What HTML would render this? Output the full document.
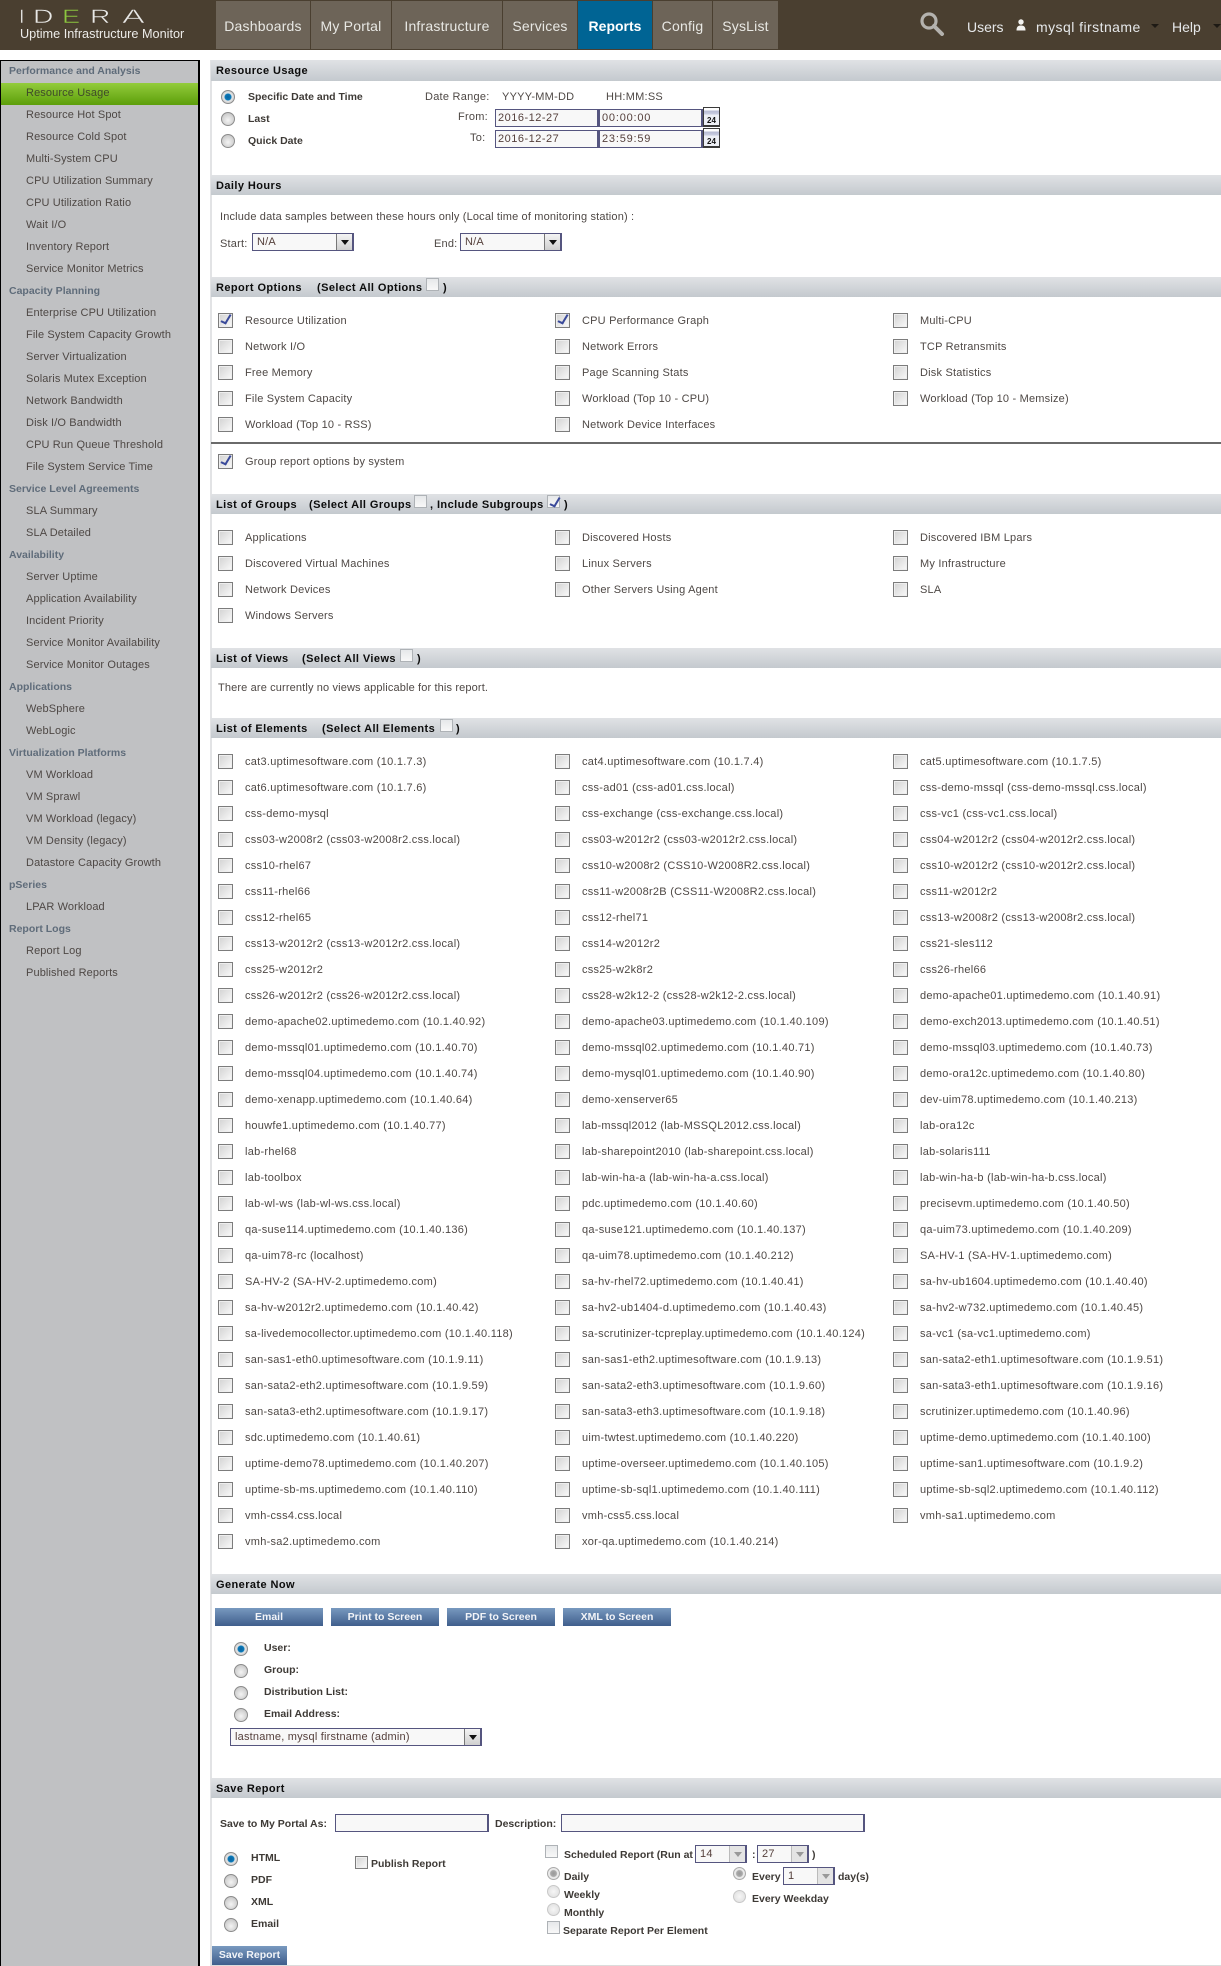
<!DOCTYPE html>
<html><head><meta charset="utf-8"><title>Uptime Infrastructure Monitor</title>
<style>
*{box-sizing:border-box}
html,body{margin:0;padding:0;background:#fff}
body{width:1221px;height:1966px;position:relative;overflow:hidden;font:11px/14px "Liberation Sans",sans-serif;letter-spacing:.2px;color:#4e4845}
.a{position:absolute;white-space:nowrap}
#hd{position:absolute;left:0;top:0;width:1221px;height:50px;background:#4a3f30;color:#f0f0f0;letter-spacing:0}
.tab{position:absolute;top:1px;height:48px;background:#6d6458;font-size:14px;line-height:51px;text-align:center;color:#e8e8e4;letter-spacing:.2px}
.tab.on{background:#006494;color:#fff;font-weight:bold;letter-spacing:0}
.ht{position:absolute;font-size:14px;line-height:20px;top:17px;color:#e6e8ea;white-space:nowrap}
.car{position:absolute;top:24px;width:0;height:0;border:4px solid transparent;border-top:4px solid #1e1a14;border-bottom:0}
.lg{position:absolute;top:6px;font-size:19.5px;line-height:22px;color:#e8e8e6;transform-origin:0 50%;-webkit-text-stroke:.5px #4a3f30}
#sb{position:absolute;left:0;top:60px;width:200px;height:1906px;background:#c0c1c3;border:1px solid #000;border-width:1px 2px 0 1px}
#sb div{height:22px;line-height:21px;padding-left:25px;white-space:nowrap;letter-spacing:.12px}
#sb .h{padding-left:8px;font-weight:bold;color:#5f6c7a;letter-spacing:0;font-size:10.5px}
#sb .on{background:linear-gradient(#93cc3c,#5c9e0a);color:#3f4a2a}
#ln{position:absolute;left:210px;top:60px;width:2px;height:1906px;background:#e2e3e5}
.s{position:absolute;left:211px;width:1010px;height:21px;background:linear-gradient(#e0e2e5,#c4c9ce);font-weight:bold;color:#0c0c0c;line-height:23px;padding-left:5px;font-size:11px;letter-spacing:.42px}
.s b{position:absolute;top:0;white-space:nowrap}
.cb{position:absolute;width:13px;height:13px;border:1px solid #7c7c7c;background:linear-gradient(135deg,#d2d2d2,#fafafa);box-shadow:inset 0 0 0 1px #eeeeee}
.ck::after{content:"";position:absolute;left:4px;top:0;width:4px;height:9px;border:solid #3a4a9a;border-width:0 2px 2px 0;transform:rotate(25deg) skewX(-6deg)}
.hc{border-color:#aeb2b6;background:linear-gradient(#e6e8ea,#f8f8f8);box-shadow:none}
.rows{position:absolute;left:0;width:1221px}
.rows>div{height:26px;position:relative}
.rows p{position:absolute;margin:0;top:0;line-height:14px;white-space:nowrap}
.rows.e p{letter-spacing:.27px}
.rows p:nth-child(1){left:245px}
.rows p:nth-child(2){left:582px}
.rows p:nth-child(3){left:920px}
.rows p::before{content:"";position:absolute;left:-27px;top:-1px;width:13px;height:13px;border:1px solid #7c7c7c;background:linear-gradient(135deg,#d2d2d2,#fafafa);box-shadow:inset 0 0 0 1px #eeeeee}
.rows p.ck::after{left:-22px;top:-1px}
.rd{position:absolute;width:14px;height:14px;border-radius:50%;border:1px solid #8c8c8c;background:radial-gradient(circle at 50% 60%,#f4f4f4,#bcbcbc)}
.rd.on{background:radial-gradient(circle,#0a64a0 0,#0a78b8 3px,#e6e6e6 4px,#c8c8c8 7px)}
.rd.off{border-color:#c8c8c8;background:radial-gradient(circle,#f6f6f6,#dcdcdc);width:13px;height:13px}
.rd.off.sel{border-color:#aaa;background:radial-gradient(circle,#999 0,#aaa 3px,#eee 4px,#ddd 7px)}
.bd{font-weight:bold;color:#3e3a36;font-size:10.5px;letter-spacing:0}
.in{position:absolute;height:18px;border:1px solid #55557f;background:#f8f8f8;font-size:11px;line-height:17px;padding-left:2px;color:#55403c;white-space:nowrap;border-width:1px 2px 1px 1px;letter-spacing:.2px}
.ar{position:absolute;right:0;top:0;width:16px;height:16px;background:linear-gradient(#f4f4f4,#cfcfcf);border-left:1px solid #777}
.ar::after{content:"";position:absolute;left:4px;top:6px;border:4px solid transparent;border-top:5px solid #111;border-bottom:0}
.ar.g{background:#e4e4e4;border-left:1px solid #bbb}
.ar.g::after{border-top-color:#999}
.cal{position:absolute;left:703px;width:17px;height:20px;border:1px solid #3a3a3a;background:linear-gradient(#fff 0,#fff 2px,#b8bcd4 3px,#c8cce0 6px,#eef0f6 7px);color:#111;font-size:8px;line-height:9px;text-align:center;padding-top:8px;font-weight:bold;letter-spacing:0;border-width:1px 1px 2px 1px}
.btn{position:absolute;height:18px;background:linear-gradient(#7899bf,#3f5e8c);color:#f2f4f8;font-weight:bold;text-align:center;line-height:18px;font-size:10.5px;letter-spacing:0}
</style></head><body>

<div id="hd">
<span class="lg" style="left:19px">I</span>
<span class="lg" style="left:33px;transform:scaleX(1.45)">D</span>
<span class="lg" style="left:62px;color:#8cc63f;transform:scaleX(1.4)">E</span>
<span class="lg" style="left:90px;transform:scaleX(1.45)">R</span>
<span class="lg" style="left:122px;transform:scaleX(1.75)">A</span>
<span class="a" style="left:20px;top:25px;font-size:12.7px;line-height:18px;color:#ecebe8">Uptime Infrastructure Monitor</span>
<div class="tab" style="left:216px;width:94px">Dashboards</div>
<div class="tab" style="left:311px;width:80px">My Portal</div>
<div class="tab" style="left:392px;width:110px">Infrastructure</div>
<div class="tab" style="left:503px;width:74px">Services</div>
<div class="tab on" style="left:578px;width:74px">Reports</div>
<div class="tab" style="left:653px;width:59px">Config</div>
<div class="tab" style="left:713px;width:65px">SysList</div>
<svg class="a" style="left:919px;top:11px" width="26" height="25" viewBox="0 0 26 25"><circle cx="10" cy="10" r="7" fill="none" stroke="#b4b2ae" stroke-width="3.2"/><path d="M15 15l8 8" stroke="#b4b2ae" stroke-width="4" stroke-linecap="round"/></svg>
<span class="ht" style="left:967px">Users</span>
<svg class="a" style="left:1015px;top:19px" width="12" height="12" viewBox="0 0 12 12"><circle cx="6" cy="3" r="2.7" fill="#f2f2f0"/><path d="M1.500 11.500c0-4 1.800-5 4.500-5s4.500 1 4.500 5z" fill="#f2f2f0"/></svg>
<span class="ht" style="left:1036px;letter-spacing:.45px">mysql firstname</span>
<i class="car" style="left:1151px"></i>
<span class="ht" style="left:1172px">Help</span>
<i class="car" style="left:1213px"></i>
</div>

<div id="sb">
<div class="h">Performance and Analysis</div>
<div class="on">Resource Usage</div>
<div>Resource Hot Spot</div>
<div>Resource Cold Spot</div>
<div>Multi-System CPU</div>
<div>CPU Utilization Summary</div>
<div>CPU Utilization Ratio</div>
<div>Wait I/O</div>
<div>Inventory Report</div>
<div>Service Monitor Metrics</div>
<div class="h">Capacity Planning</div>
<div>Enterprise CPU Utilization</div>
<div>File System Capacity Growth</div>
<div>Server Virtualization</div>
<div>Solaris Mutex Exception</div>
<div>Network Bandwidth</div>
<div>Disk I/O Bandwidth</div>
<div>CPU Run Queue Threshold</div>
<div>File System Service Time</div>
<div class="h">Service Level Agreements</div>
<div>SLA Summary</div>
<div>SLA Detailed</div>
<div class="h">Availability</div>
<div>Server Uptime</div>
<div>Application Availability</div>
<div>Incident Priority</div>
<div>Service Monitor Availability</div>
<div>Service Monitor Outages</div>
<div class="h">Applications</div>
<div>WebSphere</div>
<div>WebLogic</div>
<div class="h">Virtualization Platforms</div>
<div>VM Workload</div>
<div>VM Sprawl</div>
<div>VM Workload (legacy)</div>
<div>VM Density (legacy)</div>
<div>Datastore Capacity Growth</div>
<div class="h">pSeries</div>
<div>LPAR Workload</div>
<div class="h">Report Logs</div>
<div>Report Log</div>
<div>Published Reports</div>
</div>

<div id="ln"></div>

<div class="s" style="top:60px">Resource Usage</div>
<i class="rd on" style="left:221px;top:90px"></i><span class="a bd" style="left:248px;top:90px">Specific Date and Time</span>
<i class="rd" style="left:221px;top:112px"></i><span class="a bd" style="left:248px;top:112px">Last</span>
<i class="rd" style="left:221px;top:134px"></i><span class="a bd" style="left:248px;top:134px">Quick Date</span>
<span class="a" style="left:425px;top:90px;letter-spacing:.25px">Date Range:</span>
<span class="a" style="left:502px;top:90px;letter-spacing:.25px">YYYY-MM-DD</span>
<span class="a" style="left:606px;top:90px;letter-spacing:.25px">HH:MM:SS</span>
<span class="a" style="left:458px;top:110px;letter-spacing:.25px">From:</span>
<span class="a" style="left:470px;top:131px;letter-spacing:.25px">To:</span>
<div class="in" style="left:495px;top:109px;width:104px;letter-spacing:.5px">2016-12-27</div>
<div class="in" style="left:599px;top:109px;width:104px;letter-spacing:.8px">00:00:00</div>
<div class="cal" style="top:107px">24</div>
<div class="in" style="left:495px;top:130px;width:104px;letter-spacing:.5px">2016-12-27</div>
<div class="in" style="left:599px;top:130px;width:104px;letter-spacing:.8px">23:59:59</div>
<div class="cal" style="top:128px">24</div>

<div class="s" style="top:175px;height:20px">Daily Hours</div>
<span class="a" style="left:220px;top:210px;letter-spacing:.16px">Include data samples between these hours only (Local time of monitoring station) :</span>
<span class="a" style="left:220px;top:237px">Start:</span>
<div class="in" style="left:252px;top:233px;width:102px;padding-left:4px">N/A<i class="ar"></i></div>
<span class="a" style="left:434px;top:237px">End:</span>
<div class="in" style="left:460px;top:233px;width:102px;padding-left:4px">N/A<i class="ar"></i></div>

<div class="s" style="top:277px;height:20px">Report Options<b style="left:106px">(Select All Options</b><b style="left:232px">)</b><i class="cb hc" style="left:215px;top:1px"></i></div>
<div class="rows" style="top:314px">
<div><p class="ck">Resource Utilization</p><p class="ck">CPU Performance Graph</p><p>Multi-CPU</p></div>
<div><p>Network I/O</p><p>Network Errors</p><p>TCP Retransmits</p></div>
<div><p>Free Memory</p><p>Page Scanning Stats</p><p>Disk Statistics</p></div>
<div><p>File System Capacity</p><p>Workload (Top 10 - CPU)</p><p>Workload (Top 10 - Memsize)</p></div>
<div><p>Workload (Top 10 - RSS)</p><p>Network Device Interfaces</p></div>
</div>
<div class="a" style="left:211px;top:442px;width:1010px;height:2px;background:#6a6a6a"></div>
<div class="rows" style="top:455px">
<div><p class="ck">Group report options by system</p></div>
</div>

<div class="s" style="top:494px;height:20px">List of Groups<b style="left:98px">(Select All Groups</b><b style="left:219px">, Include Subgroups</b><b style="left:353px">)</b><i class="cb hc" style="left:203px;top:1px"></i><i class="cb hc ck" style="left:336px;top:1px"></i></div>
<div class="rows" style="top:531px">
<div><p>Applications</p><p>Discovered Hosts</p><p>Discovered IBM Lpars</p></div>
<div><p>Discovered Virtual Machines</p><p>Linux Servers</p><p>My Infrastructure</p></div>
<div><p>Network Devices</p><p>Other Servers Using Agent</p><p>SLA</p></div>
<div><p>Windows Servers</p></div>
</div>

<div class="s" style="top:648px;height:20px">List of Views<b style="left:91px">(Select All Views</b><b style="left:206px">)</b><i class="cb hc" style="left:189px;top:1px"></i></div>
<span class="a" style="left:218px;top:681px;letter-spacing:.14px">There are currently no views applicable for this report.</span>

<div class="s" style="top:718px;height:20px">List of Elements<b style="left:111px">(Select All Elements</b><b style="left:245px">)</b><i class="cb hc" style="left:229px;top:1px"></i></div>
<div class="rows e" style="top:755px">
<div><p>cat3.uptimesoftware.com (10.1.7.3)</p><p>cat4.uptimesoftware.com (10.1.7.4)</p><p>cat5.uptimesoftware.com (10.1.7.5)</p></div>
<div><p>cat6.uptimesoftware.com (10.1.7.6)</p><p>css-ad01 (css-ad01.css.local)</p><p>css-demo-mssql (css-demo-mssql.css.local)</p></div>
<div><p>css-demo-mysql</p><p>css-exchange (css-exchange.css.local)</p><p>css-vc1 (css-vc1.css.local)</p></div>
<div><p>css03-w2008r2 (css03-w2008r2.css.local)</p><p>css03-w2012r2 (css03-w2012r2.css.local)</p><p>css04-w2012r2 (css04-w2012r2.css.local)</p></div>
<div><p>css10-rhel67</p><p>css10-w2008r2 (CSS10-W2008R2.css.local)</p><p>css10-w2012r2 (css10-w2012r2.css.local)</p></div>
<div><p>css11-rhel66</p><p>css11-w2008r2B (CSS11-W2008R2.css.local)</p><p>css11-w2012r2</p></div>
<div><p>css12-rhel65</p><p>css12-rhel71</p><p>css13-w2008r2 (css13-w2008r2.css.local)</p></div>
<div><p>css13-w2012r2 (css13-w2012r2.css.local)</p><p>css14-w2012r2</p><p>css21-sles112</p></div>
<div><p>css25-w2012r2</p><p>css25-w2k8r2</p><p>css26-rhel66</p></div>
<div><p>css26-w2012r2 (css26-w2012r2.css.local)</p><p>css28-w2k12-2 (css28-w2k12-2.css.local)</p><p>demo-apache01.uptimedemo.com (10.1.40.91)</p></div>
<div><p>demo-apache02.uptimedemo.com (10.1.40.92)</p><p>demo-apache03.uptimedemo.com (10.1.40.109)</p><p>demo-exch2013.uptimedemo.com (10.1.40.51)</p></div>
<div><p>demo-mssql01.uptimedemo.com (10.1.40.70)</p><p>demo-mssql02.uptimedemo.com (10.1.40.71)</p><p>demo-mssql03.uptimedemo.com (10.1.40.73)</p></div>
<div><p>demo-mssql04.uptimedemo.com (10.1.40.74)</p><p>demo-mysql01.uptimedemo.com (10.1.40.90)</p><p>demo-ora12c.uptimedemo.com (10.1.40.80)</p></div>
<div><p>demo-xenapp.uptimedemo.com (10.1.40.64)</p><p>demo-xenserver65</p><p>dev-uim78.uptimedemo.com (10.1.40.213)</p></div>
<div><p>houwfe1.uptimedemo.com (10.1.40.77)</p><p>lab-mssql2012 (lab-MSSQL2012.css.local)</p><p>lab-ora12c</p></div>
<div><p>lab-rhel68</p><p>lab-sharepoint2010 (lab-sharepoint.css.local)</p><p>lab-solaris111</p></div>
<div><p>lab-toolbox</p><p>lab-win-ha-a (lab-win-ha-a.css.local)</p><p>lab-win-ha-b (lab-win-ha-b.css.local)</p></div>
<div><p>lab-wl-ws (lab-wl-ws.css.local)</p><p>pdc.uptimedemo.com (10.1.40.60)</p><p>precisevm.uptimedemo.com (10.1.40.50)</p></div>
<div><p>qa-suse114.uptimedemo.com (10.1.40.136)</p><p>qa-suse121.uptimedemo.com (10.1.40.137)</p><p>qa-uim73.uptimedemo.com (10.1.40.209)</p></div>
<div><p>qa-uim78-rc (localhost)</p><p>qa-uim78.uptimedemo.com (10.1.40.212)</p><p>SA-HV-1 (SA-HV-1.uptimedemo.com)</p></div>
<div><p>SA-HV-2 (SA-HV-2.uptimedemo.com)</p><p>sa-hv-rhel72.uptimedemo.com (10.1.40.41)</p><p>sa-hv-ub1604.uptimedemo.com (10.1.40.40)</p></div>
<div><p>sa-hv-w2012r2.uptimedemo.com (10.1.40.42)</p><p>sa-hv2-ub1404-d.uptimedemo.com (10.1.40.43)</p><p>sa-hv2-w732.uptimedemo.com (10.1.40.45)</p></div>
<div><p>sa-livedemocollector.uptimedemo.com (10.1.40.118)</p><p>sa-scrutinizer-tcpreplay.uptimedemo.com (10.1.40.124)</p><p>sa-vc1 (sa-vc1.uptimedemo.com)</p></div>
<div><p>san-sas1-eth0.uptimesoftware.com (10.1.9.11)</p><p>san-sas1-eth2.uptimesoftware.com (10.1.9.13)</p><p>san-sata2-eth1.uptimesoftware.com (10.1.9.51)</p></div>
<div><p>san-sata2-eth2.uptimesoftware.com (10.1.9.59)</p><p>san-sata2-eth3.uptimesoftware.com (10.1.9.60)</p><p>san-sata3-eth1.uptimesoftware.com (10.1.9.16)</p></div>
<div><p>san-sata3-eth2.uptimesoftware.com (10.1.9.17)</p><p>san-sata3-eth3.uptimesoftware.com (10.1.9.18)</p><p>scrutinizer.uptimedemo.com (10.1.40.96)</p></div>
<div><p>sdc.uptimedemo.com (10.1.40.61)</p><p>uim-twtest.uptimedemo.com (10.1.40.220)</p><p>uptime-demo.uptimedemo.com (10.1.40.100)</p></div>
<div><p>uptime-demo78.uptimedemo.com (10.1.40.207)</p><p>uptime-overseer.uptimedemo.com (10.1.40.105)</p><p>uptime-san1.uptimesoftware.com (10.1.9.2)</p></div>
<div><p>uptime-sb-ms.uptimedemo.com (10.1.40.110)</p><p>uptime-sb-sql1.uptimedemo.com (10.1.40.111)</p><p>uptime-sb-sql2.uptimedemo.com (10.1.40.112)</p></div>
<div><p>vmh-css4.css.local</p><p>vmh-css5.css.local</p><p>vmh-sa1.uptimedemo.com</p></div>
<div><p>vmh-sa2.uptimedemo.com</p><p>xor-qa.uptimedemo.com (10.1.40.214)</p></div>
</div>

<div class="s" style="top:1574px;height:20px">Generate Now</div>
<div class="btn" style="left:215px;top:1608px;width:108px">Email</div>
<div class="btn" style="left:331px;top:1608px;width:108px">Print to Screen</div>
<div class="btn" style="left:447px;top:1608px;width:108px">PDF to Screen</div>
<div class="btn" style="left:563px;top:1608px;width:108px">XML to Screen</div>
<i class="rd on" style="left:234px;top:1642px"></i><span class="a bd" style="left:264px;top:1641px">User:</span>
<i class="rd" style="left:234px;top:1664px"></i><span class="a bd" style="left:264px;top:1663px">Group:</span>
<i class="rd" style="left:234px;top:1686px"></i><span class="a bd" style="left:264px;top:1685px">Distribution List:</span>
<i class="rd" style="left:234px;top:1708px"></i><span class="a bd" style="left:264px;top:1707px">Email Address:</span>
<div class="in" style="left:230px;top:1728px;width:252px;padding-left:4px">lastname, mysql firstname (admin)<i class="ar"></i></div>

<div class="s" style="top:1778px;height:20px">Save Report</div>
<span class="a bd" style="left:220px;top:1817px">Save to My Portal As:</span>
<div class="in" style="left:335px;top:1814px;width:154px"></div>
<span class="a bd" style="left:495px;top:1817px">Description:</span>
<div class="in" style="left:561px;top:1814px;width:304px"></div>
<i class="rd on" style="left:224px;top:1852px"></i><span class="a bd" style="left:251px;top:1851px">HTML</span>
<i class="rd" style="left:224px;top:1874px"></i><span class="a bd" style="left:251px;top:1873px">PDF</span>
<i class="rd" style="left:224px;top:1896px"></i><span class="a bd" style="left:251px;top:1895px">XML</span>
<i class="rd" style="left:224px;top:1918px"></i><span class="a bd" style="left:251px;top:1917px">Email</span>
<i class="cb" style="left:355px;top:1856px"></i><span class="a bd" style="left:371px;top:1857px">Publish Report</span>
<i class="cb hc" style="left:545px;top:1845px"></i><span class="a bd" style="left:564px;top:1848px">Scheduled Report (Run at</span>
<div class="in" style="left:695px;top:1845px;width:52px;padding-left:4px">14<i class="ar g"></i></div>
<span class="a bd" style="left:752px;top:1848px">:</span>
<div class="in" style="left:757px;top:1845px;width:52px;padding-left:4px">27<i class="ar g"></i></div>
<span class="a bd" style="left:812px;top:1848px">)</span>
<i class="rd off sel" style="left:547px;top:1867px"></i><span class="a bd" style="left:564px;top:1870px">Daily</span>
<i class="rd off" style="left:547px;top:1885px"></i><span class="a bd" style="left:564px;top:1888px">Weekly</span>
<i class="rd off" style="left:547px;top:1903px"></i><span class="a bd" style="left:564px;top:1906px">Monthly</span>
<i class="cb hc" style="left:547px;top:1921px"></i><span class="a bd" style="left:563px;top:1924px">Separate Report Per Element</span>
<i class="rd off sel" style="left:733px;top:1867px"></i><span class="a bd" style="left:752px;top:1870px">Every</span>
<div class="in" style="left:783px;top:1867px;width:52px;padding-left:4px">1<i class="ar g"></i></div>
<span class="a bd" style="left:838px;top:1870px">day(s)</span>
<i class="rd off" style="left:733px;top:1890px"></i><span class="a bd" style="left:752px;top:1892px">Every Weekday</span>
<div class="btn" style="left:212px;top:1946px;width:75px;height:19px;line-height:19px">Save Report</div>
<div class="a" style="left:211px;top:1965px;width:1010px;height:1px;background:#dcdcdc"></div>
</body></html>
